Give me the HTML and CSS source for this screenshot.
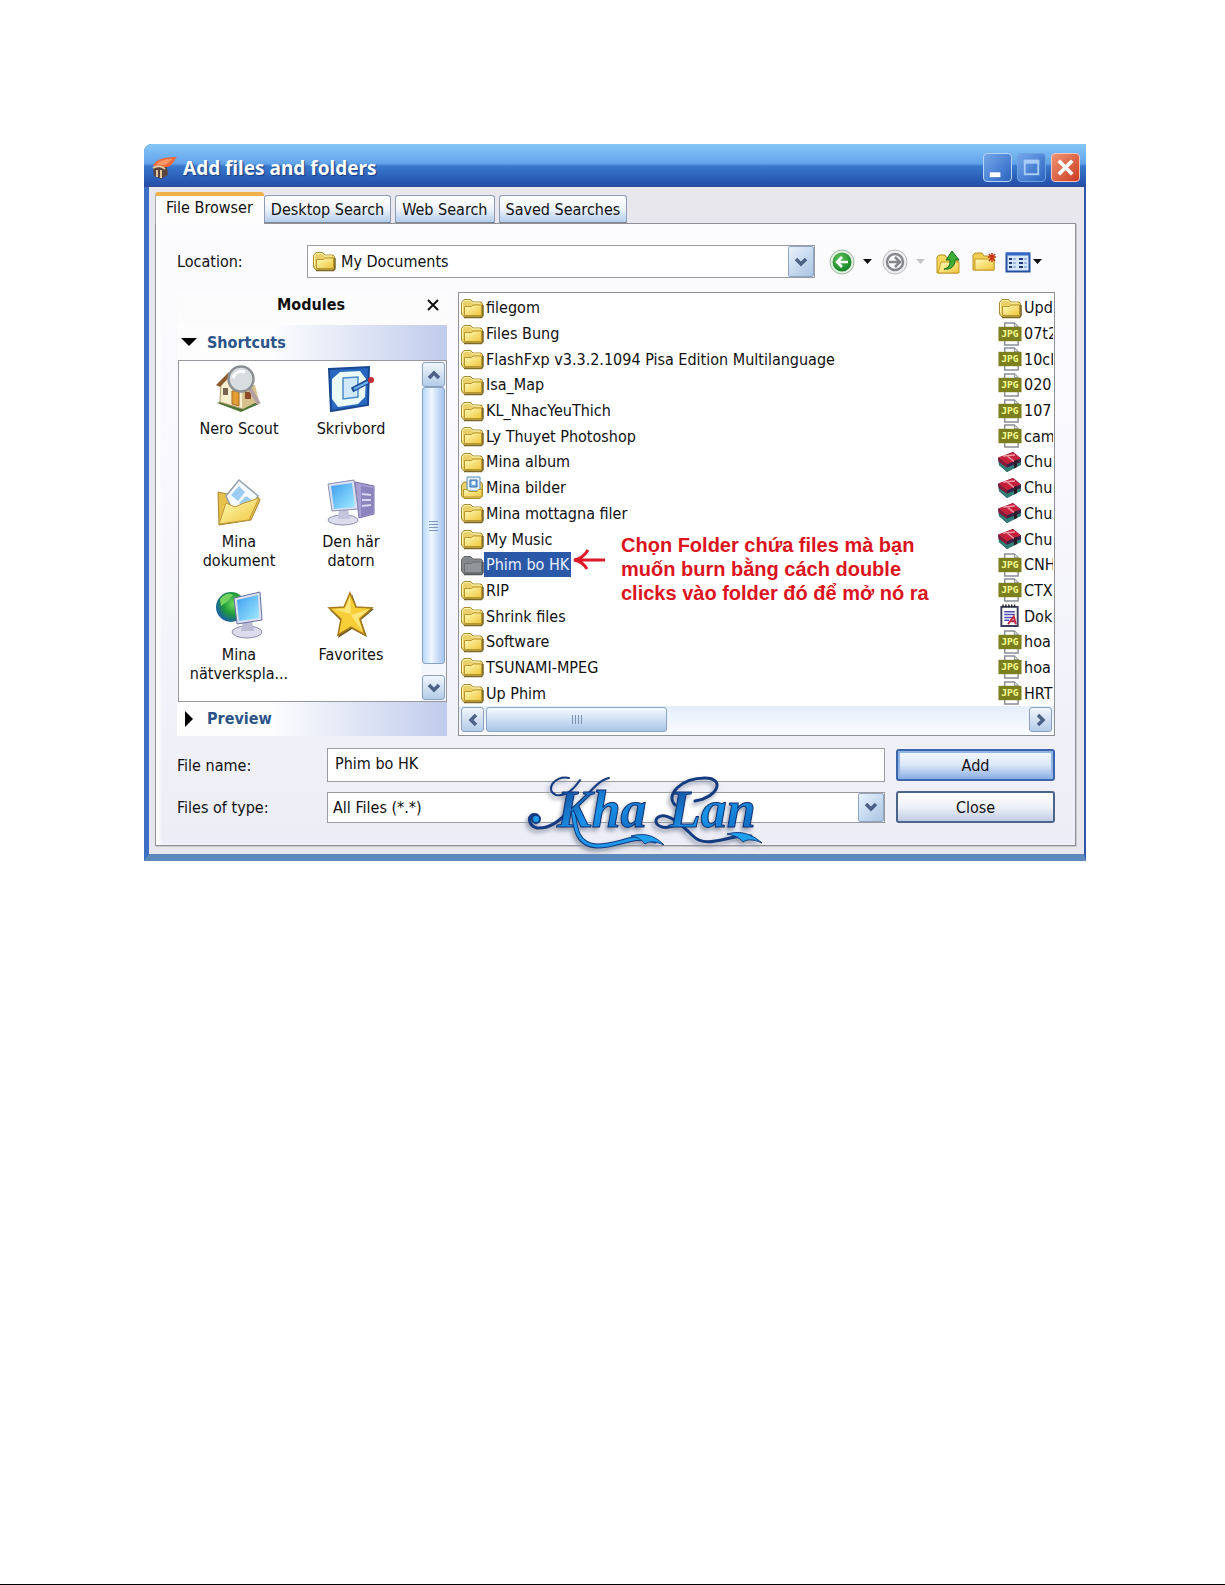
FILE: index.html
```html
<!DOCTYPE html>
<html lang="en">
<head>
<meta charset="utf-8">
<title>Add files and folders</title>
<link rel="stylesheet" href="styles.css">
</head>
<body>
<svg class="defs" aria-hidden="true">
  <defs>
    <linearGradient id="gold" x1="0" y1="0" x2="1" y2="1"><stop offset="0" stop-color="#fffbb8"/><stop offset="1" stop-color="#eec53a"/></linearGradient>
    <linearGradient id="screen" x1="0" y1="0" x2="1" y2="1"><stop offset="0" stop-color="#3f9cf0"/><stop offset="1" stop-color="#9fecff"/></linearGradient>
    <radialGradient id="globe" cx=".6" cy=".4" r=".7"><stop offset="0" stop-color="#6fdc5c"/><stop offset=".5" stop-color="#1e9a3c"/><stop offset="1" stop-color="#1b50c0"/></radialGradient>
    <radialGradient id="green" cx=".4" cy=".3" r=".8"><stop offset="0" stop-color="#5cc25c"/><stop offset="1" stop-color="#0b7a1c"/></radialGradient>
    <linearGradient id="ink" x1="0" y1="0" x2="1" y2="1"><stop offset="0" stop-color="#123f8c"/><stop offset=".5" stop-color="#1a92e8"/><stop offset="1" stop-color="#0c5fb8"/></linearGradient>
    <symbol id="folder" viewBox="0 0 24 22">
      <path d="M1.500 17V5.500L4 2.500h6.500L13 5h8l1.500 1.500V18L20.500 20H4z" fill="#ead06a" stroke="#a88a30"/>
      <path d="M2.500 16V6l2-2.500H10L12.500 6H20" fill="none" stroke="#fff6b0"/>
      <path d="M4.500 18.500V9.500h7L13 8h8.500v10.500z" fill="url(#gold)" stroke="#b8962e"/>
      <path d="M4 20.500h17.500l1.500-2V8" fill="none" stroke="#7c6824" stroke-width="1.500"/>
    </symbol>
    <symbol id="folder-selected" viewBox="0 0 24 22">
      <path d="M1.500 17V5.500L4 2.500h6.500L13 5h8l1.500 1.500V18L20.500 20H4z" fill="#85898c" stroke="#666"/>
      <path d="M4.500 18.500V9.500h7L13 8h8.500v10.500z" fill="#90959a" stroke="#6c7074"/>
      <path d="M4 20.500h17.500l1.500-2V8" fill="none" stroke="#4e5358" stroke-width="1.500"/>
    </symbol>
    <symbol id="pictures" viewBox="0 0 24 24">
      <path d="M1.500 20V9L4 6h17l1.500 2v12L20 22.500H4z" fill="#ead06a" stroke="#a88a30"/>
      <path d="M7 1h13v14H7z" fill="#e4f0fc" stroke="#5b8cc0"/><path d="M10 4h7v7h-7z" fill="#7db0e0" stroke="#3a6fae"/><circle cx="13.500" cy="7" r="2" fill="#fff"/>
      <path d="M3.500 13.500h4l1.500 2h8l1.500-2H22V21H3.500z" fill="url(#gold)" stroke="#b8962e"/>
    </symbol>
    <symbol id="jpg" viewBox="0 0 24 25">
      <path d="M6.500 1h10l4 4v19h-14z" fill="#fff" stroke="#8b8f95" stroke-width="1.500"/><path d="M16.500 1v4h4" fill="#ddd" stroke="#8b8f95"/>
      <path d="M0 5h24v15H0z" fill="#7c7f1e"/>
      <text x="12" y="16" text-anchor="middle" class="jpg-text">JPG</text>
    </symbol>
    <symbol id="archive" viewBox="0 0 24 22">
      <path d="M0 7 15 1l8 6.500v6L9 21 1 14z" fill="#1c2f4c"/>
      <path d="M1 11l8 5.500L23 10v4L9 21 1 14z" fill="#2f7d74"/>
      <path d="M0 6.500 15 1l8 6.500-14 6z" fill="#c5203c"/><path d="m0 7 9 6.500v3L1 11z" fill="#8c1838"/><path d="m9 13.500 14-6V11L9 16.500z" fill="#3a2348"/>
      <path d="m8 4 8 6.500M5 5l12-1" stroke="#f29aa8" stroke-width="1.500" fill="none"/><path d="m16 10 3-1.500V16l-3 1.500z" fill="#2a1d28"/>
    </symbol>
    <symbol id="document" viewBox="0 0 24 25">
      <path d="M3 3h17v20H3z" fill="#fff" stroke="#3c3c5c" stroke-width="2"/><path d="M4 2h15" stroke="#222" stroke-width="3" stroke-dasharray="1.500 1.500"/>
      <path d="M6 8h11M6 11h11M6 14h8M6 17h5" stroke="#4a4ab0" stroke-width="1.500"/>
      <path d="m10 21 6-8 2 8m-5-3h5" fill="none" stroke="#c02848" stroke-width="2"/>
    </symbol>
    <symbol id="chevron" viewBox="0 0 14 14"><path d="m2 4 5 5 5-5" fill="none" stroke="#4d6185" stroke-width="3.500"/></symbol>
    <symbol id="caret" viewBox="0 0 9 6"><path d="M0 0h9L4.500 5z" fill="currentColor"/></symbol>
  </defs>
</svg>

<main class="window">
  <header class="titlebar">
    <svg class="app-icon" viewBox="0 0 26 24" aria-hidden="true">
      <path d="M1 9C5 3 12 1 25 1c-3 3-4 7-7 9-4 1-5 4-7 8z" fill="#ee6a3c"/><path d="M4 8C9 4 14 3 21 3c-4 2-5 5-9 6z" fill="#ff9a68"/>
      <path d="M1 11h14l1 8-7 4-7-3z" fill="#5a4440"/><path d="M1 12c4-3 9-2 12 1M5 14v7M9 14v8" stroke="#e3c6a0" stroke-width="2" fill="none"/>
    </svg>
    <h1 class="title">Add files and folders</h1>
    <button class="win-btn" aria-label="Minimize"><svg viewBox="0 0 28 28"><path d="M6 19h11v5H6z" fill="#fff"/></svg></button>
    <button class="win-btn dim" aria-label="Maximize" disabled><svg viewBox="0 0 28 28"><path d="M7 7h14v14H7z" fill="none" stroke="#a8ccf8" stroke-width="2"/><path d="M6 8h16" stroke="#a8ccf8" stroke-width="4"/></svg></button>
    <button class="win-btn close" aria-label="Close window"><svg viewBox="0 0 28 28"><path d="m7 7 14 14M21 7 7 21" stroke="#fff" stroke-width="4"/></svg></button>
  </header>

  <div class="body">
    <nav class="tabs" role="tablist">
      <button class="tab active" role="tab" aria-selected="true">File Browser</button>
      <button class="tab" role="tab" aria-selected="false">Desktop Search</button>
      <button class="tab" role="tab" aria-selected="false">Web Search</button>
      <button class="tab" role="tab" aria-selected="false">Saved Searches</button>
    </nav>

    <section class="panel">
      <div class="location">
        <label class="location-label" for="location">Location:</label>
        <div class="combo">
          <svg class="combo-icon" aria-hidden="true"><use href="#folder"/></svg>
          <select id="location"><option>My Documents</option></select>
          <span class="drop"><svg><use href="#chevron"/></svg></span>
        </div>
        <div class="toolbar">
          <div class="tool-group">
            <button class="tool" aria-label="Back"><svg viewBox="0 0 26 26"><circle cx="13" cy="13" r="12" fill="#e4f0e4" stroke="#9db89d"/><circle cx="13" cy="13" r="9.500" fill="url(#green)"/><path d="M19 13H8m5-5-5 5 5 5" fill="none" stroke="#fff" stroke-width="2.500"/></svg></button>
            <button class="tool-caret" aria-label="Back history"><svg><use href="#caret"/></svg></button>
          </div>
          <div class="tool-group">
            <button class="tool" aria-label="Forward"><svg viewBox="0 0 26 26"><circle cx="13" cy="13" r="12" fill="#f0f0f2" stroke="#b8b8bc"/><circle cx="13" cy="13" r="8" fill="#fafafa" stroke="#85878d" stroke-width="2.500"/><path d="M7 13h11m-5-5 5 5-5 5" fill="none" stroke="#85878d" stroke-width="2.500"/></svg></button>
            <button class="tool-caret faded" aria-label="Forward history"><svg><use href="#caret"/></svg></button>
          </div>
          <button class="tool" aria-label="Up one level"><svg viewBox="0 0 26 26"><path d="M2 24V8l2-2h6l2 3h11v15z" fill="#f4d860" stroke="#b8901c"/><path d="M3 24 6 13h18v11z" fill="url(#gold)" stroke="#c49a24"/><path d="M9 20c5-1 6-4 6-9h-4l6-9 7 9h-4c0 6-4 10-11 9z" fill="#3fae34" stroke="#1b6e1c"/></svg></button>
          <button class="tool" aria-label="New folder"><svg viewBox="0 0 26 26"><path d="M2 21V6l2-2h7l2 3h10v14z" fill="#f0ce54" stroke="#b8901c"/><path d="M4 21V10h19v11z" fill="url(#gold)" stroke="#c49a24"/><path d="M21 4v9m-3-8 6 7m1-4h-8m7-3-6 7" stroke="#cc3418" stroke-width="1.500"/></svg></button>
          <div class="tool-group tight">
            <button class="tool" aria-label="View"><svg viewBox="0 0 26 26"><path d="M1.500 4.500h23v18h-23z" fill="#d4e6fc" stroke="#2450a0" stroke-width="2"/><path d="M1 5h24" stroke="#3468c4" stroke-width="3"/><path d="M4 10h3m7 0h4M4 14h3m7 0h4M4 18h3m7 0h4" stroke="#203878" stroke-width="2"/><path d="M8 10h3m8 0h3M8 14h3m8 0h3M8 18h3m8 0h3" stroke="#6c88c8"/></svg></button>
            <button class="tool-caret" aria-label="View options"><svg><use href="#caret"/></svg></button>
          </div>
        </div>
      </div>

      <div class="workspace">
        <aside class="modules">
          <div class="modules-head"><h2>Modules</h2><button aria-label="Close modules"><svg viewBox="0 0 12 12"><path d="m1 1 10 10M11 1 1 11" stroke="#111" stroke-width="2"/></svg></button></div>
          <button class="section"><svg viewBox="0 0 18 18"><path d="M1 5h16l-8 8z"/></svg>Shortcuts</button>
          <div class="shortcut-box">
            <ul class="shortcuts">
              <li><svg viewBox="0 0 48 48"><path d="M2 38 22 32l22 7-18 8z" fill="#4c7434"/><path d="M6 18 15 10l13 13v21L5 37z" fill="#f8efcf" stroke="#b09a68"/><path d="m2 20 12-12 14 12 12 0L44 36l-16 8V24L15 12z" fill="#d8c08c"/><path d="m1 20 13-13 4 1L5 22z" fill="#8a5a2c"/><path d="M8 23h5v7H8z" fill="#7a6250"/><path d="M17 26h7v15l-7-2z" fill="#e49c34" stroke="#a46a20"/><path d="M30 27h6v7h-6z" fill="#8c4a28"/><path d="m35 24 9 15" stroke="#b4a0a0" stroke-width="4"/><circle cx="26" cy="14" r="12.500" fill="#d8dee0" stroke="#8b9094" stroke-width="2.500"/><path d="M18 13c2-6 7-8 12-6" stroke="#fff" stroke-width="3" fill="none"/></svg>Nero Scout</li>
              <li><svg viewBox="0 0 48 48"><path d="m2 4 40-2-1 38L4 46z" fill="#2868c0" stroke="#184890" stroke-width="2"/><path d="m13 7 20-1 6 8-1 18-7 7-20 3-6-8V14z" fill="#e9fbf4"/><path d="m16 13 15-1v20l-15 2z" fill="#cfe8fa" stroke="#4c8ccc" stroke-width="1.500"/><path d="m25 25 17-9" stroke="#1c4a90" stroke-width="5"/><path d="m27 24 14-7" stroke="#70b4f4" stroke-width="2"/><circle cx="44" cy="15" r="3" fill="#c02c34"/></svg>Skrivbord</li>
              <li><svg viewBox="0 0 48 48"><path d="m3 14 9 2 30 2 3 4-9 20-32 5z" fill="#e8c04c" stroke="#a88432"/><path d="m11 18 13-16 19 16-11 18-14-3z" fill="#f4faff" stroke="#94a0ac" stroke-width="1.500"/><path d="m16 17 8-9 6 6-7 9zm8 8 7-7 6 4-7 10z" fill="#9ccdf0"/><path d="m4 46 7-21 9 4 9-4 15-5-10 22z" fill="url(#gold)" stroke="#c09838"/></svg>Mina dokument</li>
              <li><svg viewBox="0 0 48 48"><path d="m28 4 19 4v28l-15 4z" fill="#a8a0d4" stroke="#7870a8"/><path d="m34 8 12 2v25l-12 4z" fill="#8c84bc"/><path d="m35 16 9 1m-9 5 9 0m-9 6 9-1" stroke="#d8d4f0" stroke-width="2"/><ellipse cx="16" cy="42" rx="15" ry="5" fill="#dcdcec" stroke="#8c8ca8"/><path d="M12 31h9l2 10H11z" fill="#c4c4dc"/><path d="m1 6 26-4 4 29-26 2z" fill="#dce0f0" stroke="#8890b4"/><path d="m4 8 21-3 3 24-21 2z" fill="url(#screen)"/></svg>Den här datorn</li>
              <li><svg viewBox="0 0 48 48"><circle cx="16" cy="16" r="15" fill="url(#globe)"/><path d="M5 8c5-6 10-6 13-4l-5 6-7 5z" fill="#72d45e"/><ellipse cx="32" cy="41" rx="15" ry="6" fill="#dcdcec" stroke="#8c8ca8"/><path d="M28 30h9l2 10H26z" fill="#bcbcd4"/><path d="m19 7 26-6 2 28-25 4z" fill="#dce0f0" stroke="#6870a0"/><path d="m22 9 21-5 1 23-20 3z" fill="url(#screen)"/></svg>Mina nätverkspla...</li>
              <li><svg viewBox="0 0 48 48"><path d="m24 2 5 14 17 1-13 11 6 17-15-8-14 9 3-17L2 18l16-1z" fill="#6d5a22" transform="translate(1 1)"/><path d="m23 2 6 14 16 1-12 11 5 16-14-8-13 8 3-16L2 17l15-1z" fill="#f8cf38" stroke="#a87c1c" stroke-width="1.500"/><path d="m23 6 1 17-18-5 12 0zm1 18 19-6-12 9 5 14z" fill="#ffec8c" opacity=".8"/></svg>Favorites</li>
            </ul>
            <div class="vscroll">
              <button aria-label="Scroll up"><svg class="flip"><use href="#chevron"/></svg></button>
              <div class="vthumb"><i></i><i></i><i></i><i></i></div>
              <button aria-label="Scroll down"><svg><use href="#chevron"/></svg></button>
            </div>
          </div>
          <button class="section preview"><svg viewBox="0 0 18 18"><path d="M5 1v16l8-8z"/></svg>Preview</button>
        </aside>

        <div class="files">
          <ul class="file-list">
            <li><svg><use href="#folder"/></svg><span>filegom</span></li>
            <li><svg><use href="#folder"/></svg><span>Files Bung</span></li>
            <li><svg><use href="#folder"/></svg><span>FlashFxp v3.3.2.1094 Pisa Edition Multilanguage</span></li>
            <li><svg><use href="#folder"/></svg><span>Isa_Map</span></li>
            <li><svg><use href="#folder"/></svg><span>KL_NhacYeuThich</span></li>
            <li><svg><use href="#folder"/></svg><span>Ly Thuyet Photoshop</span></li>
            <li><svg><use href="#folder"/></svg><span>Mina album</span></li>
            <li><svg><use href="#pictures"/></svg><span>Mina bilder</span></li>
            <li><svg><use href="#folder"/></svg><span>Mina mottagna filer</span></li>
            <li><svg><use href="#folder"/></svg><span>My Music</span></li>
            <li class="selected"><svg><use href="#folder-selected"/></svg><span>Phim bo HK</span></li>
            <li><svg><use href="#folder"/></svg><span>RIP</span></li>
            <li><svg><use href="#folder"/></svg><span>Shrink files</span></li>
            <li><svg><use href="#folder"/></svg><span>Software</span></li>
            <li><svg><use href="#folder"/></svg><span>TSUNAMI-MPEG</span></li>
            <li><svg><use href="#folder"/></svg><span>Up Phim</span></li>
            <li><svg><use href="#folder"/></svg><span>Upd</span></li>
            <li><svg><use href="#jpg"/></svg><span>07t2</span></li>
            <li><svg><use href="#jpg"/></svg><span>10cl</span></li>
            <li><svg><use href="#jpg"/></svg><span>020</span></li>
            <li><svg><use href="#jpg"/></svg><span>107</span></li>
            <li><svg><use href="#jpg"/></svg><span>cam</span></li>
            <li><svg><use href="#archive"/></svg><span>Chu</span></li>
            <li><svg><use href="#archive"/></svg><span>Chu</span></li>
            <li><svg><use href="#archive"/></svg><span>Chu</span></li>
            <li><svg><use href="#archive"/></svg><span>Chu</span></li>
            <li><svg><use href="#jpg"/></svg><span>CNH</span></li>
            <li><svg><use href="#jpg"/></svg><span>CTX</span></li>
            <li><svg><use href="#document"/></svg><span>Dok</span></li>
            <li><svg><use href="#jpg"/></svg><span>hoa</span></li>
            <li><svg><use href="#jpg"/></svg><span>hoa</span></li>
            <li><svg><use href="#jpg"/></svg><span>HRT</span></li>
          </ul>
          <div class="hscroll">
            <button aria-label="Scroll left"><svg class="left"><use href="#chevron"/></svg></button>
            <div class="hthumb"><i></i><i></i><i></i><i></i></div>
            <button class="end" aria-label="Scroll right"><svg class="right"><use href="#chevron"/></svg></button>
          </div>
          <div class="note" lang="vi">
            <svg viewBox="0 0 32 22" aria-hidden="true"><path d="M32 11H3M15 1C12 6 7 10 1 11c6 1 10 4 13 9" fill="none" stroke="#e01828" stroke-width="3"/></svg>
            <p>Chọn Folder chứa files mà bạn<br>muốn burn bằng cách double<br>clicks vào folder đó để mở nó ra</p>
          </div>
        </div>
      </div>

      <form class="fields">
        <label for="filename">File name:</label>
        <input id="filename" type="text" value="Phim bo HK">
        <button class="btn primary" type="button">Add</button>
        <label for="filetype">Files of type:</label>
        <div class="combo type">
          <select id="filetype"><option>All Files (*.*)</option></select>
          <span class="drop"><svg><use href="#chevron"/></svg></span>
        </div>
        <button class="btn" type="button">Close</button>
      </form>
    </section>
  </div>

  <svg class="signature" viewBox="0 0 244 76" role="img" aria-label="Kha Lan">
    <g fill="none" stroke="#143a80" stroke-linecap="round">
      <path d="M44 3C28 0 20 16 31 20c10 2 18-6 24-15" stroke-width="2"/>
      <path d="M12 40C2 37 2 51 12 53c14 1 24-8 32-18" stroke-width="3"/>
      <path d="M56 26C66 16 74 5 84 3" stroke-width="2"/>
      <path d="M48 34c2 20 4 36 24 37 24 0 36-13 58-5" stroke-width="5"/>
      <path d="M170 26C194 22 200 3 180 3 156 3 140 20 150 30" stroke-width="3"/>
      <path d="M148 51c-12 4-20-2-16-8 8-8 24 6 36 18 14 14 36-2 58 0" stroke-width="3"/>
    </g>
    <path d="M48 34c2 20 4 36 24 37 24 0 36-13 58-5" fill="none" stroke="#1f97e8" stroke-width="3"/>
    <path d="M106 61c12-3 22-2 33 9-9-4-15-4-19-1-4-5-8-7-14-8zm96-2c12-3 22-2 35 9-9-4-15-4-19-1-4-5-10-7-16-8z" fill="#1f9fec" stroke="#143a80"/>
    <circle cx="11" cy="44" r="4" fill="#1f9fec" stroke="#143a80" stroke-width="2"/>
    <text class="sign-text" x="32" y="52">Kha</text>
    <text class="sign-text" x="144" y="52">Lan</text>
  </svg>
</main>
</body>
</html>
```
FILE: styles.css
```css
* { box-sizing: border-box; }

body {
  margin: 0;
  min-height: 100vh;
  padding: 144px 139px 0 144px;
  background: #fff;
  border-bottom: 1px solid #000;
  color: #111;
  font: 16px/19px "DejaVu Sans Condensed", "Noto Sans", sans-serif;
}

button, input, select { font: inherit; color: inherit; margin: 0; padding: 0; border: 0; background: none; }
button { display: flex; align-items: center; justify-content: center; white-space: nowrap; }
ul, h1, h2, p { margin: 0; padding: 0; list-style: none; }
svg { display: block; flex: none; }
.defs { position: absolute; width: 0; height: 0; }

.window {
  position: relative;
  background: #e9e7ee;
  border: solid #2f58ac;
  border-width: 0 2px 7px 5px;
  border-left-color: #3d6fc4;
  border-bottom-color: #5c88bc;
  border-top-left-radius: 8px;
}

.titlebar {
  display: flex;
  align-items: center;
  gap: 5px;
  height: 43px;
  margin: 0 -2px 0 -5px;
  padding: 4px 6px 0 8px;
  background: linear-gradient(#86c6f8, #62a4ea 45%, #3878cc 52%, #2450ac 95%, #34488c);
  border-top-left-radius: 8px;
}
.app-icon { width: 26px; height: 24px; }
.title {
  flex: 1;
  color: #fff;
  font: bold 19px/24px "Noto Sans", sans-serif;
  text-shadow: 1px 1px 1px #1c3c80;
}
.win-btn {
  width: 29px;
  height: 29px;
  border: 1px solid #b4d4fa;
  border-radius: 4px;
  background: linear-gradient(135deg, #74a8ec, #2c64c0);
}
.win-btn svg { width: 27px; height: 27px; }
.dim { border-color: #6ea0e4; }
.close { border-color: #f4c4bc; background: linear-gradient(135deg, #ee9474, #cc3c20); }

.body { padding: 5px 8px 8px 6px; }

.tabs { display: flex; align-items: flex-end; gap: 4px; height: 31px; }
.tab {
  height: 28px;
  padding: 0 6px;
  border: 1px solid #8f9cb4;
  border-bottom-color: #80868e;
  border-radius: 3px 3px 0 0;
  background: linear-gradient(#fff, #eef3fa 50%, #b4cdec);
}
.tab.active {
  height: 32px;
  margin: 0 -4px -1px 0;
  padding: 0 11px 5px 10px;
  border: 0;
  border-top: 4px solid #f0b04c;
  border-left: 1px solid #a8a8ac;
  background: #fdfdfe;
  position: relative;
}

.panel {
  padding: 21px 20px 22px 21px;
  border: 1px solid #909098;
  box-shadow: inset 4px 0 3px #fff, 1px 1px 0 #c8c8cc;
  background: linear-gradient(#fcfcfe, #f8f8fd 40%, #ededf7);
}

.location { display: flex; align-items: center; height: 33px; margin-bottom: 14px; }
.location-label { width: 130px; }
.combo {
  display: flex;
  align-items: stretch;
  flex: 1;
  height: 33px;
  border: 1px solid #9a9ca0;
  background: #fff;
}
.combo select { flex: 1; min-width: 0; appearance: none; padding-left: 5px; outline: 0; }
.combo-icon { width: 24px; height: 22px; margin: 4px 0 0 4px; }
.drop {
  display: flex;
  align-items: center;
  justify-content: center;
  width: 26px;
  border: 1px solid #90a4c0;
  border-radius: 2px;
  background: linear-gradient(135deg, #e8f2fc, #a8c4e4);
  pointer-events: none;
}
.drop svg, .vscroll svg, .hscroll svg { width: 14px; height: 14px; }

.toolbar { display: flex; align-items: center; gap: 10px; width: 240px; padding-left: 14px; }
.tool-group { display: flex; align-items: center; gap: 8px; }
.tool-group.tight { gap: 2px; margin-left: -2px; }
.tool svg { width: 26px; height: 26px; }
.tool-caret svg { width: 9px; height: 6px; }
.faded { color: #c4c4c8; }

.workspace { display: grid; grid-template-columns: 270px minmax(0, 1fr); gap: 11px; min-height: 444px; }
.modules { display: flex; flex-direction: column; }
.modules-head { display: flex; align-items: center; height: 33px; padding: 0 8px 8px 100px; background: #fcfcfd; }
.modules-head h2 { flex: 1; font-size: 16px; line-height: 19px; }
.modules-head svg { width: 12px; height: 12px; }
.section {
  justify-content: flex-start;
  gap: 9px;
  height: 35px;
  padding: 0 0 1px 3px;
  color: #2c5488;
  font-weight: bold;
  background: linear-gradient(90deg, #fdfdfe 35%, #c0ccec);
}
.section svg { width: 18px; height: 18px; fill: #000; }
.preview { height: 34px; }
.shortcut-box { display: flex; flex: 1; margin-left: 1px; border: 1px solid #98989e; background: #fff; }
.shortcuts {
  flex: 1;
  display: grid;
  grid-template-columns: repeat(2, 112px);
  grid-template-rows: 113px 113px auto;
  align-content: start;
  padding: 4px 0 0 4px;
}
.shortcuts li { display: flex; flex-direction: column; align-items: center; gap: 6px; padding: 0 5px; text-align: center; }
.shortcuts svg { width: 48px; height: 48px; }

.vscroll { display: flex; flex-direction: column; width: 25px; padding: 1px; background: #f4f7fc; }
.vscroll button, .hscroll button {
  width: 23px;
  height: 25px;
  border: 1px solid #8ca0bc;
  border-radius: 3px;
  background: linear-gradient(#f0f6fc, #b4cce8);
}
.flip { rotate: 180deg; }
.left { rotate: 90deg; }
.right { rotate: -90deg; }
.vthumb, .hthumb { display: flex; align-items: center; justify-content: center; gap: 2px; border: 1px solid #8ca4c4; border-radius: 3px; }
.vthumb { flex: 1; flex-direction: column; margin-bottom: 11px; background: linear-gradient(90deg, #b8d8f8, #eef7ff 40%, #a4c4ec); }
.vthumb i { width: 9px; height: 1px; background: #7c98bc; }

.files { position: relative; display: flex; flex-direction: column; border: 1px solid #909098; background: #fff; }
.file-list {
  flex: 1;
  display: grid;
  grid-auto-flow: column;
  grid-template-columns: minmax(0, 1fr) 55px;
  grid-template-rows: repeat(16, 1fr);
  padding: 2px 1px 0;
}
.file-list li { display: flex; align-items: center; min-width: 0; overflow: hidden; white-space: nowrap; }
.file-list svg { width: 24px; height: 24px; }
.file-list span { padding: 3px 2px; }
.selected span { color: #e8f0ff; background: #2c58a8; }
.jpg-text { font: bold 10px "DejaVu Sans Mono", monospace; fill: #f8ff90; }

.hscroll { display: flex; gap: 2px; height: 29px; padding: 1px 2px 3px; background: linear-gradient(#e4eefa, #fafcff); }
.hthumb { width: 181px; background: linear-gradient(#f4faff, #cfe0f4 50%, #a8c4e8); }
.hthumb i { width: 1px; height: 9px; background: #7c90ac; }
.hscroll .end { margin-left: auto; }

/* Handwritten hint laid over the empty part of the list */
.note { position: absolute; top: 240px; left: 114px; display: flex; gap: 16px; color: #dc1420; }
.note svg { width: 32px; height: 22px; margin-top: 16px; }
.note p { font: bold 20px/24px "Liberation Sans", sans-serif; white-space: nowrap; }

.fields {
  display: grid;
  grid-template-columns: 150px minmax(0, 1fr) 170px;
  row-gap: 9px;
  align-items: center;
  margin-top: 12px;
}
.fields input { height: 34px; padding: 0 7px 4px; border: 1px solid #9a9ca0; background: #fff; outline: 0; }
.type { height: 31px; }
.btn {
  height: 32px;
  margin-left: 11px;
  border: 2px solid #4c6488;
  border-radius: 3px;
  background: linear-gradient(#fff, #eef1f8 50%, #c0cce4);
}
.primary { border-color: #3c64a8; box-shadow: inset 0 0 0 2px #90b4e8; background: linear-gradient(#f4f9ff, #dce8f8 50%, #88ace4); }

/* Logo floating above the bottom edge of the dialog */
.signature { position: absolute; left: 376px; bottom: 3px; width: 244px; height: 76px; filter: drop-shadow(-2px 3px 2px #9098a8); pointer-events: none; }
.sign-text { font: italic bold 52px "Liberation Serif", serif; fill: url(#ink); stroke: #123070; stroke-width: 1px; }
```
